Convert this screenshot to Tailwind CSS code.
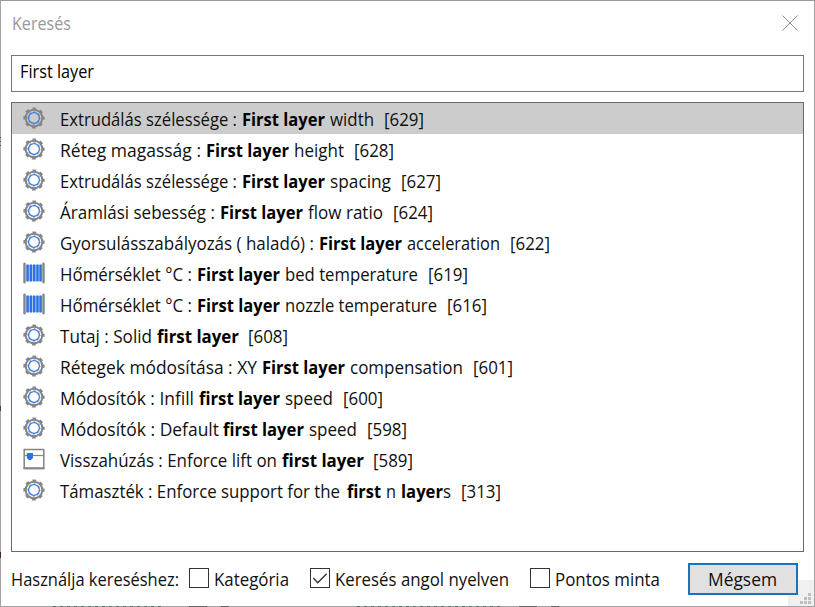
<!DOCTYPE html>
<html lang="hu">
<head>
<meta charset="utf-8">
<title>Keresés</title>
<script src="https://cdn.jsdelivr.net/npm/@tailwindcss/browser@4"></script>
</head>
<body class="bg-white">
<svg class="hidden">
  <symbol id="gear" viewBox="0 0 22 22">
    <g fill="none">
      <circle cx="11" cy="11" r="9.4" stroke="#858585" stroke-width="2.4" stroke-dasharray="3.6 3.783" stroke-dashoffset="1.8"/>
      <circle cx="11" cy="11" r="8.3" stroke="#858585" stroke-width="2"/>
      <circle cx="11" cy="11" r="5.4" stroke="#3a7ce2" stroke-width="1.3"/>
      <circle cx="11" cy="11" r="6.1" stroke="#3a7ce2" stroke-width="1" stroke-dasharray="2 2.79" stroke-dashoffset="1"/>
    </g>
  </symbol>
  <symbol id="spool" viewBox="0 0 22 22">
    <path d="M3 3H19V19H3Z" fill="#a9c8f5"/>
    <path d="M4.6 2.5V19.5M7.9 2.5V19.5M11.2 2.5V19.5M14.5 2.5V19.5M17.6 2.5V19.5" stroke="#2a72e0" stroke-width="2.3"/>
    <path d="M1.5 1.8V20.2M20.5 1.8V20.2" stroke="#858585" stroke-width="2.4" stroke-linecap="round"/>
  </symbol>
  <symbol id="printer" viewBox="0 0 22 22">
    <path d="M1.2 1V21M20.8 1V21M1 1.5H21" stroke="#858585" stroke-width="1.5" fill="none"/>
    <path d="M1 7.5H21" stroke="#858585" stroke-width="1.2"/>
    <path d="M.5 20.3H21.5" stroke="#858585" stroke-width="2.2"/>
    <path d="M3.8 5H10V10L7.9 12H5.9L3.8 10Z" fill="#2a72e0"/>
  </symbol>
</svg>
<div class="relative flex h-[607px] w-[815px] flex-col overflow-hidden bg-white font-['Open_Sans','Noto_Sans',sans-serif] text-[17.5px] leading-[24px] text-[#101010]">
  <header class="flex h-[55px] shrink-0 items-start justify-between pl-3 pr-[17px] pt-3 text-[#999]">
    <svg class="h-6 w-[60px] overflow-visible" fill="currentColor"><text y="18" textLength="59" lengthAdjust="spacingAndGlyphs">Keresés</text></svg>
    <svg class="mt-[3px] h-4 w-4" viewBox="0 0 16 16" stroke="#8a8a8a" stroke-width="1"><path d="M.5 .5L15.5 15.5M15.5 .5L.5 15.5"/></svg>
  </header>
  <div class="ml-[11px] h-[37px] w-[793px] shrink-0 border border-[#767676] pl-[7px] pt-[4px] text-black"><svg class="h-6 w-[76px] overflow-visible"><text x="1" y="18" textLength="74" lengthAdjust="spacingAndGlyphs">First layer</text></svg></div>
  <main id="list" class="ml-[11px] mt-[10px] h-[450px] w-[793px] shrink-0 border border-[#696969]"></main>
  <footer class="flex h-[55px] shrink-0 items-start pl-[11px] pt-[11px]">
    <svg class="mt-[5px] h-6 w-[178px] shrink-0 overflow-visible" fill="currentColor"><text x="0" y="18" textLength="168" lengthAdjust="spacingAndGlyphs">Használja kereséshez:</text></svg>
    <span class="mt-[5px] h-5 w-5 shrink-0 border border-[#333]"></span>
    <svg class="ml-[5px] mt-[5px] h-6 w-[96px] shrink-0 overflow-visible" fill="currentColor"><text y="18" textLength="75" lengthAdjust="spacingAndGlyphs">Kategória</text></svg>
    <span class="mt-[5px] h-5 w-5 shrink-0 border border-[#333]"><svg viewBox="0 0 18 18" fill="none" stroke="#333" stroke-width="1.4"><path d="M2.3 9L6.7 13.7L15.7 4.7"/></svg></span>
    <svg class="ml-[5px] mt-[5px] h-6 w-[195px] shrink-0 overflow-visible" fill="currentColor"><text y="18" textLength="174" lengthAdjust="spacingAndGlyphs">Keresés angol nyelven</text></svg>
    <span class="mt-[5px] h-5 w-5 shrink-0 border border-[#333]"></span>
    <svg class="ml-[5px] mt-[5px] h-6 w-[133px] shrink-0 overflow-visible" fill="currentColor"><text y="18" textLength="105" lengthAdjust="spacingAndGlyphs">Pontos minta</text></svg>
    <button class="relative z-10 flex h-8 w-[110px] shrink-0 items-start border-2 border-[#1874bf] bg-[#e1e1e1] pl-[18px] pt-[3px] text-left text-[#101010]"><svg class="h-6 w-[70px] overflow-visible" fill="currentColor"><text y="18" textLength="69" lengthAdjust="spacingAndGlyphs">Mégsem</text></svg></button>
  </footer>
  <svg class="absolute bottom-0 right-0 h-[27px] w-[27px] bg-[#f0f0f0]" viewBox="0 0 27 27" fill="#bfbfbf"><path d="M20 13h3v3h-3zM16 17h3v3h-3zM20 17h3v3h-3zM12 21h3v3h-3zM16 21h3v3h-3zM20 21h3v3h-3z"/></svg>
  <div class="absolute inset-0 border border-[#a3a3a3]"></div>
  <div class="absolute left-0 top-0 h-px w-full bg-[#999]"></div>
  <div class="absolute bottom-0 left-[53px] h-px w-[112px] bg-[repeating-linear-gradient(90deg,#4d8060_0_3px,#a3a3a3_3px_7px)]"></div>
  <div class="absolute bottom-0 left-[357px] h-px w-[146px] bg-[repeating-linear-gradient(90deg,#4d8060_0_3px,#a3a3a3_3px_7px)]"></div>
  <div class="absolute bottom-0 left-[189px] h-px w-[18px] bg-[#666]"></div>
  <div class="absolute bottom-0 left-[221px] h-px w-[8px] bg-[#666]"></div>
  <div class="absolute bottom-0 left-[519px] h-px w-[18px] bg-[#666]"></div>
  <div class="absolute bottom-0 left-[551px] h-px w-[8px] bg-[#666]"></div>
  <div class="absolute left-0 top-[137px] h-[9px] w-px bg-[repeating-linear-gradient(#555_0_1px,#a3a3a3_1px_4px)]"></div>
  <div class="absolute left-0 top-[406px] h-[5px] w-px bg-[#5b4030]"></div>
  <div class="absolute left-0 top-[552px] h-[6px] w-px bg-[#4a2c20]"></div>
</div>
<script>
// Each row: icon, then runs of [text, start x, end x, bold]
const rows = [
  ['gear', ['Extrudálás szélessége :',60,237], ['First layer',242,325,1], ['width',330,374], ['[629]',384,424]],
  ['gear', ['Réteg magasság :',60,201], ['First layer',206,289,1], ['height',294,344], ['[628]',354,394]],
  ['gear', ['Extrudálás szélessége :',60,237], ['First layer',242,325,1], ['spacing',330,391], ['[627]',401,441]],
  ['gear', ['Áramlási sebesség :',60,215], ['First layer',220,303,1], ['flow ratio',308,383], ['[624]',393,433]],
  ['gear', ['Gyorsulásszabályozás ( haladó) :',60,314], ['First layer',319,402,1], ['acceleration',407,500], ['[622]',510,550]],
  ['spool', ['Hőmérséklet °C :',60,192], ['First layer',197,280,1], ['bed temperature',285,418], ['[619]',428,468]],
  ['spool', ['Hőmérséklet °C :',60,192], ['First layer',197,280,1], ['nozzle temperature',285,437], ['[616]',447,487]],
  ['gear', ['Tutaj : Solid',60,152], ['first layer',157,239,1], ['[608]',248,288]],
  ['gear', ['Rétegek módosítása : XY',60,257], ['First layer',262,345,1], ['compensation',350,463], ['[601]',473,513]],
  ['gear', ['Módosítók : Infill',60,194], ['first layer',199,280,1], ['speed',285,333], ['[600]',343,383]],
  ['gear', ['Módosítók : Default',60,219], ['first layer',223,304,1], ['speed',309,357], ['[598]',367,407]],
  ['printer', ['Visszahúzás : Enforce lift on',60,277], ['first layer',282,364,1], ['[589]',373,413]],
  ['gear', ['Támaszték : Enforce support for the',60,340], ['first',347,381,1], ['n',386,396], ['layer',401,443,1], ['s',443,451], ['[313]',461,501]]
];
const list = document.getElementById('list');
rows.forEach(([icon, ...runs], i) => {
  let x = 60;
  const parts = runs.map(([t, from, to, bold]) => {
    const gap = from - x, w = to - from;
    x = to;
    return `<svg class="h-6 shrink-0 overflow-visible ${bold ? 'font-bold' : ''}" style="width:${w}px;margin-left:${gap}px" fill="${bold ? '#000' : 'currentColor'}"><text y="18" textLength="${w}" lengthAdjust="spacingAndGlyphs">${t}</text></svg>`;
  }).join('');
  list.insertAdjacentHTML('beforeend', `<div class="flex h-[31px] items-start pl-[11px] ${i ? '' : 'bg-[#cccccc]'}"><svg class="mr-[15px] mt-[4px] h-[22px] w-[22px] shrink-0"><use href="#${icon}"/></svg><div class="flex pt-[5px]">${parts}</div></div>`);
});
</script>
</body>
</html>
